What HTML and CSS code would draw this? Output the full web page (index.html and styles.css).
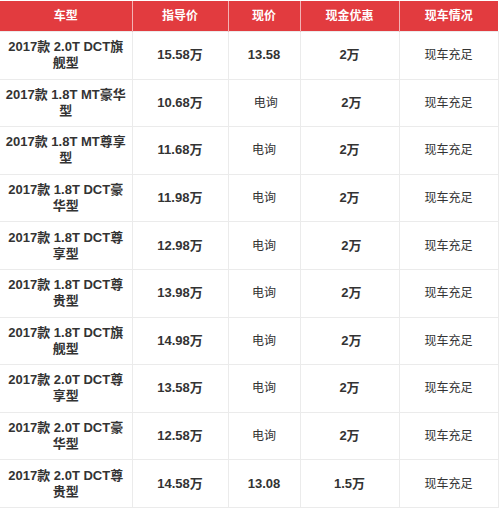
FILE: index.html
```html
<!DOCTYPE html>
<html lang="zh">
<head>
<meta charset="utf-8">
<link rel="stylesheet" href="styles.css">
</head>
<body>
<table class="price-table">
  <colgroup>
    <col class="c1"><col class="c2"><col class="c3"><col class="c4"><col class="c5">
  </colgroup>
  <thead>
    <tr><th>车型</th><th>指导价</th><th>现价</th><th>现金优惠</th><th>现车情况</th></tr>
  </thead>
  <tbody>
    <tr><td class="b model">2017款 2.0T DCT旗<br>舰型</td><td class="b">15.58万</td><td class="b">13.58</td><td class="b">2万</td><td>现车充足</td></tr>
    <tr><td class="b model">2017款 1.8T MT豪华<br>型</td><td class="b">10.68万</td><td>&nbsp;电询</td><td class="b">&nbsp;2万</td><td>现车充足</td></tr>
    <tr><td class="b model">2017款 1.8T MT尊享<br>型</td><td class="b">11.68万</td><td>电询</td><td class="b">2万</td><td>现车充足</td></tr>
    <tr><td class="b model">2017款 1.8T DCT豪<br>华型</td><td class="b">11.98万</td><td>电询</td><td class="b">2万</td><td>现车充足</td></tr>
    <tr><td class="b model">2017款 1.8T DCT尊<br>享型</td><td class="b">12.98万</td><td>电询</td><td class="b">&nbsp;2万</td><td>现车充足</td></tr>
    <tr><td class="b model">2017款 1.8T DCT尊<br>贵型</td><td class="b">13.98万</td><td>电询</td><td class="b">&nbsp;2万</td><td>现车充足</td></tr>
    <tr><td class="b model">2017款 1.8T DCT旗<br>舰型</td><td class="b">14.98万</td><td>电询</td><td class="b">&nbsp;2万</td><td>现车充足</td></tr>
    <tr><td class="b model">2017款 2.0T DCT尊<br>享型</td><td class="b">13.58万</td><td>电询</td><td class="b">2万</td><td>现车充足</td></tr>
    <tr><td class="b model">2017款 2.0T DCT豪<br>华型</td><td class="b">12.58万</td><td>电询</td><td class="b">2万</td><td>现车充足</td></tr>
    <tr><td class="b model">2017款 2.0T DCT尊<br>贵型</td><td class="b">14.58万</td><td class="b">13.08</td><td class="b">1.5万</td><td>现车充足</td></tr>
  </tbody>
</table>
</body>
</html>
```
FILE: styles.css
```css
html, body {
  margin: 0;
  padding: 0;
  background: #fff;
}
body {
  padding-top: 1px;
  font-family: "Liberation Sans", "Noto Sans CJK SC", sans-serif;
  color: #333;
}
.price-table {
  width: 498px;
  border-collapse: collapse;
  table-layout: fixed;
  font-size: 12px;
}
.c1 { width: 132px; }
.c2 { width: 96px; }
.c3 { width: 72px; }
.c4 { width: 99px; }
.c5 { width: 99px; }
.price-table th {
  background: #e23b3f;
  color: #fff;
  font-weight: bold;
  height: 30px;
  padding: 0;
  border-left: 1px solid #f3b2b4;
  text-align: center;
  vertical-align: middle;
  line-height: 16px;
}
.price-table th:first-child { border-left: none; }
.price-table td {
  height: 46.6px;
  padding: 0 6px;
  border: 1px solid #ebebeb;
  text-align: center;
  vertical-align: middle;
  line-height: 16px;
  font-weight: normal;
}
.price-table td:first-child { border-left: none; padding: 0 2px; }
.price-table td.model { white-space: nowrap; }
.price-table td.b { font-weight: bold; font-size: 13px; }
```
